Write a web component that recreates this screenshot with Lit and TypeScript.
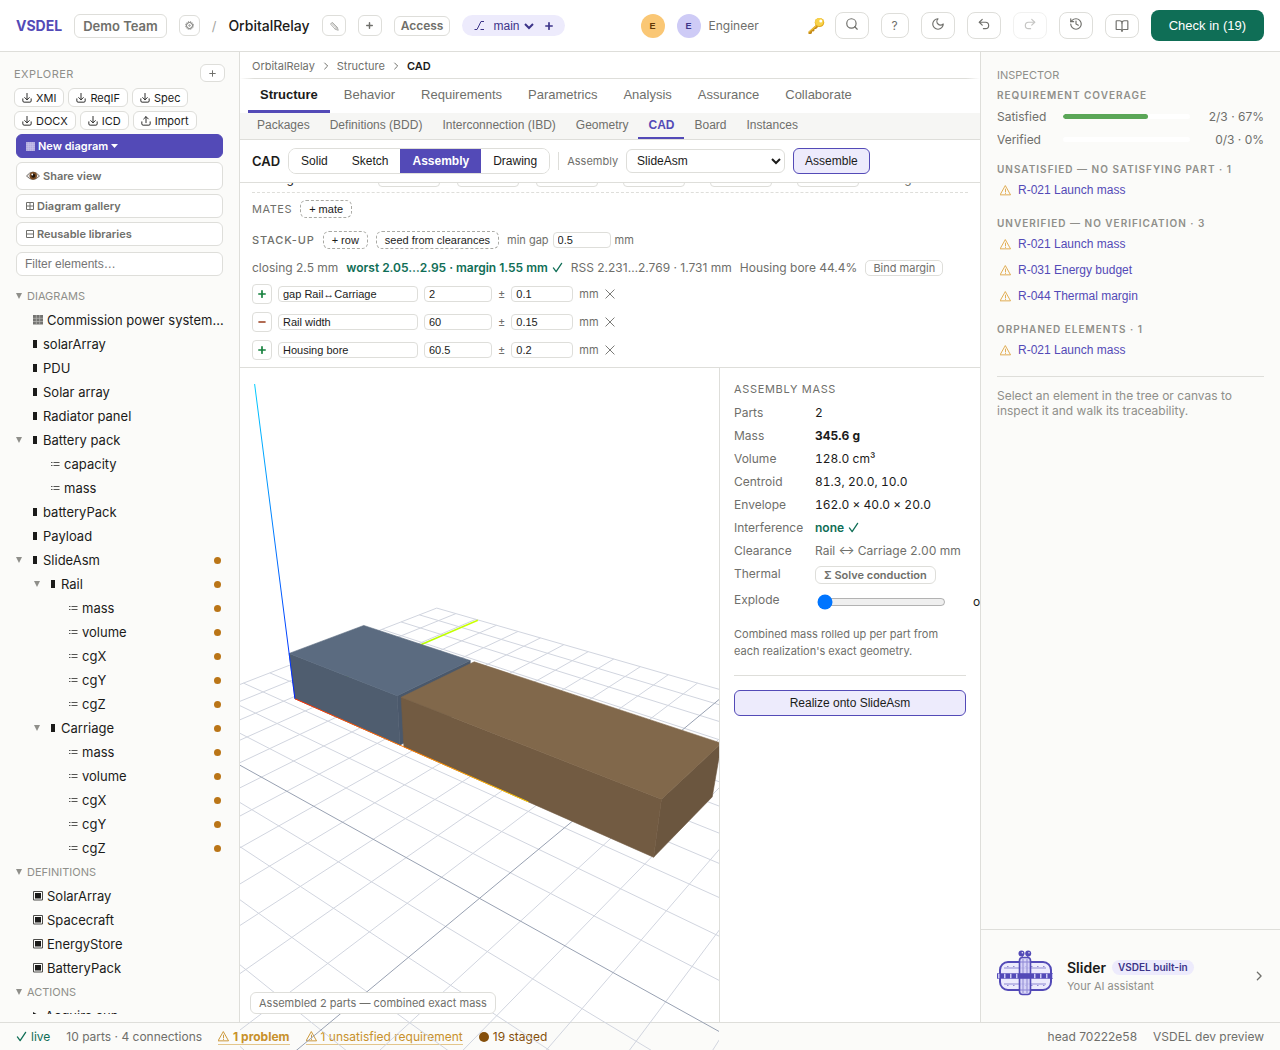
import { LitElement, html, svg, css, nothing } from "lit";
import type { TemplateResult } from "lit";
import { customElement } from "lit/decorators.js";
import { classMap } from "lit/directives/class-map.js";

/* ---------- icons ---------- */

const stroke = (size: number, body: TemplateResult, width = 2) => html`<svg
  class="icon" width=${size} height=${size} viewBox="0 0 24 24" fill="none" stroke="currentColor"
  stroke-width=${width} stroke-linecap="round" stroke-linejoin="round" aria-hidden="true">${body}</svg>`;

const icons = {
  download: () => stroke(10, svg`<path d="M12 1v15M6.500 11l5.500 5.500 5.500-5.500M2 14v5a3 3 0 0 0 3 3h14a3 3 0 0 0 3-3v-5"/>`, 2.2),
  upload: () => stroke(10, svg`<path d="M12 16V2M6.500 7 12 1.500 17.500 7M2 14v5a3 3 0 0 0 3 3h14a3 3 0 0 0 3-3v-5"/>`, 2.2),
  search: () => stroke(14, svg`<circle cx="11" cy="11" r="8"/><path d="m21 21-4.3-4.3"/>`),
  moon: () => stroke(14, svg`<path d="M12 3a6 6 0 0 0 9 9 9 9 0 1 1-9-9Z"/>`),
  undo: () => stroke(14, svg`<path d="M9 14 4 9l5-5"/><path d="M4 9h10.5a5.5 5.5 0 0 1 0 11H11"/>`),
  redo: () => stroke(14, svg`<path d="m15 14 5-5-5-5"/><path d="M20 9H9.500a5.500 5.500 0 0 0 0 11H13"/>`),
  history: () => stroke(14, svg`<path d="M3 12a9 9 0 1 0 9-9 9.750 9.750 0 0 0-6.740 2.740L3 8"/><path d="M3 3v5h5M12 7v5l4 2"/>`),
  book: () => stroke(14, svg`<path d="M12 7v14"/><path d="M3 18a1 1 0 0 1-1-1V4a1 1 0 0 1 1-1h5a4 4 0 0 1 4 4 4 4 0 0 1 4-4h5a1 1 0 0 1 1 1v13a1 1 0 0 1-1 1h-6a3 3 0 0 0-3 3 3 3 0 0 0-3-3z"/>`),
  plus: (size = 10, width = 3.4) => stroke(size, svg`<path d="M12 2.500v19M2.500 12h19"/>`, width),
  minus: (size = 10) => stroke(size, svg`<path d="M3 12h18"/>`, 5),
  close: () => stroke(10, svg`<path d="M2 2l20 20M22 2L2 22"/>`, 2.2),
  check: () => stroke(11, svg`<path d="M3 13l6 8L21 3"/>`, 2.8),
  chevron: (size = 10) => stroke(size, svg`<path d="m8 3 9 9-9 9"/>`, 3),
  warning: (size = 11) => stroke(size, svg`<path d="M12 2 23 21.500H1zM12 9v6M12 18v.5"/>`, 2),
  gear: () => html`<svg class="icon" width="9" height="9" viewBox="0 0 18 18" fill="none" stroke="currentColor" aria-hidden="true">
    <circle cx="9" cy="9" r="6" stroke-width="2"/><circle cx="9" cy="9" r="1.500" stroke-width="1.500"/>
    <circle cx="9" cy="9" r="7.800" stroke-width="1.800" stroke-dasharray="2 2.080"/></svg>`,
  pencil: () => html`<svg class="icon" width="10" height="10" viewBox="0 0 20 20" fill="none" stroke="currentColor" stroke-width="1.800" aria-hidden="true">
    <path d="M3 6 6.500 2.500 16.500 12.500l2 6-6-2zM5 4l10.500 10.500M12.500 16.500l4-4"/></svg>`,
  branch: () => html`<svg class="icon" width="11" height="11" viewBox="0 0 22 22" fill="none" stroke="currentColor" stroke-width="2" aria-hidden="true">
    <path d="M1 19h5L14 3h6M13 19h7"/></svg>`,
  key: () => html`<svg class="icon" width="18" height="18" viewBox="0 0 36 36" aria-hidden="true">
    <path d="M19 15 3 29.500V34h5l2-2v-3h3l2-2v-3h3l5-5z" fill="#c58a17"/>
    <path d="M19 15 3 29.500V32l18-15z" fill="#f0c23b"/>
    <ellipse cx="25" cy="11" rx="9.500" ry="9" fill="#e3a91e"/>
    <ellipse cx="24.500" cy="10" rx="8.500" ry="8" fill="#f8d34a"/>
    <circle cx="27.500" cy="8" r="3" fill="#fff"/></svg>`,
  eye: () => html`<svg class="icon" width="14" height="12" viewBox="0 0 28 24" aria-hidden="true">
    <path d="M1 12Q14-4 27 12 14 26 1 12Z" fill="#e9e7e6" stroke="#77716d" stroke-width="2"/>
    <circle cx="14.500" cy="11.500" r="7.500" fill="#7a4c22"/><circle cx="14.500" cy="11.500" r="4" fill="#1d130c"/>
    <circle cx="12.500" cy="9" r="1.800" fill="#fff"/></svg>`,
  panel: () => html`<svg class="icon" width="9" height="9" viewBox="0 0 9 9" aria-hidden="true">
    <path d="M0 0h9v9H0z" fill="#b3acdf"/><path d="M0 2.500h9M0 4.500h9M0 6.500h9M2.500 0v9M4.500 0v9M6.500 0v9" stroke="#c8c3ea" stroke-width=".5"/></svg>`,
  squaredPlus: () => html`<svg class="icon" width="8" height="8" viewBox="0 0 8 8" fill="none" stroke="currentColor" aria-hidden="true">
    <path d="M.5.500h7v7h-7zM4 .500v7M.5 4h7"/></svg>`,
  squaredMinus: () => html`<svg class="icon" width="8" height="8" viewBox="0 0 8 8" fill="none" stroke="currentColor" aria-hidden="true">
    <path d="M.5.500h7v7h-7zM.5 4h7"/></svg>`,
  caret: () => html`<svg class="icon" width="7" height="4" viewBox="0 0 7 4" fill="currentColor" aria-hidden="true"><path d="M0 0h7L3.500 4z"/></svg>`,
};

/** Small glyphs that stand before the names in the model tree. */
const kindGlyph: Record<string, () => TemplateResult> = {
  diagram: () => html`<svg class="icon" width="10" height="10" viewBox="0 0 10 10" aria-hidden="true">
    <path d="M0 0h10v9.500H0z" fill="#737371"/><path d="M3.300 0v10M6.700 0v10M0 3.300h10M0 6.500h10" stroke="#b9b9b6" stroke-width=".7"/></svg>`,
  part: () => html`<svg class="icon" width="4" height="8" viewBox="0 0 4 8" aria-hidden="true"><path d="M0 0h4v8H0z" fill="#1b1b1a"/></svg>`,
  value: () => html`<svg class="icon" width="9" height="6" viewBox="0 0 9 6" aria-hidden="true">
    <path d="M0 1.500h1.500M0 4.500h1.500M2.500 1.500h6M2.500 4.500h6" stroke="#555553"/></svg>`,
  block: () => html`<svg class="icon" width="10" height="10" viewBox="0 0 10 10" aria-hidden="true">
    <path d="M.5.500h9v8.500h-9z" fill="none" stroke="#4c4c4a"/><path d="M2 2h6v5.500H2z" fill="#1b1b1a"/></svg>`,
  action: () => html`<svg class="icon" width="8" height="8" viewBox="0 0 8 8" aria-hidden="true"><path d="M0 0l7 4-7 4z" fill="#1b1b1a"/></svg>`,
};

/* ---------- shared styles ---------- */

const base = css`
  :host {
    --ink: #1b1b1a;
    --muted: #6f6f6b;
    --faint: #8f8f8a;
    --line: #dededa;
    --accent: #534ab7;
    --accent-soft: #edebfc;
    --green: #0f6e56;
    --amber: #c8912b;
    --ui: Inter, "Noto Sans", sans-serif;
    --control: "Liberation Sans", Arial, sans-serif;
  }
  *,
  *::before,
  *::after { box-sizing: border-box; }
  .icon { flex: none; display: block; }
  button,
  input,
  select { font: 12px var(--control); color: var(--ink); margin: 0; }
  button {
    display: inline-flex;
    align-items: center;
    justify-content: center;
    gap: 4px;
    padding: 0;
    white-space: nowrap;
    background: #fff;
    border: 1px solid var(--line);
    border-radius: 6px;
  }
  a { color: inherit; text-decoration: none; }
  h2,
  h3,
  p,
  ul,
  dl,
  dd { margin: 0; padding: 0; }
  ul { list-style: none; }
`;

/* ---------- 3D scene ---------- */

type Vec = [number, number, number];

const dot = (a: Vec, b: Vec) => a[0] * b[0] + a[1] * b[1] + a[2] * b[2];
const sub = (a: Vec, b: Vec): Vec => [a[0] - b[0], a[1] - b[1], a[2] - b[2]];
const scale = (a: Vec, k: number): Vec => [a[0] * k, a[1] * k, a[2] * k];
const cross = (a: Vec, b: Vec): Vec => [
  a[1] * b[2] - a[2] * b[1],
  a[2] * b[0] - a[0] * b[2],
  a[0] * b[1] - a[1] * b[0],
];
const unit = (a: Vec) => scale(a, 1 / Math.hypot(...a));

const VIEW_HEIGHT = 700;
const ENVELOPE: Vec = [162, 40, 20];
const CENTER = scale(ENVELOPE, 0.5);
const DIAGONAL = Math.hypot(...ENVELOPE);
const FOCAL = VIEW_HEIGHT / 2 / Math.tan((25 * Math.PI) / 180);
const EYE = scale([0.9, -1.1, 0.75], DIAGONAL);
const BACK = unit(EYE);
const RIGHT = unit(cross([0, 0, 1], BACK));
const UP = cross(BACK, RIGHT);
const DISTANCE = Math.hypot(...EYE);
const NEAR = 8;

const depth = (p: Vec) => DISTANCE - dot(sub(p, CENTER), BACK);
const project = (p: Vec) => {
  const q = sub(p, CENTER);
  const k = FOCAL / depth(p);
  return [dot(q, RIGHT) * k, -dot(q, UP) * k].map((n) => +n.toFixed(2));
};

/** Cuts a segment at the near plane and projects what remains. */
const segment = (a: Vec, b: Vec) => {
  const da = depth(a);
  const db = depth(b);
  const cut = (near: Vec, far: Vec, dn: number, df: number): Vec => {
    const t = (NEAR - dn) / (df - dn);
    return [0, 1, 2].map((i) => near[i] + (far[i] - near[i]) * t) as Vec;
  };
  const p = project(da < NEAR ? cut(a, b, da, db) : a);
  const q = project(db < NEAR ? cut(b, a, db, da) : b);
  return `M${p}L${q}`;
};

const floorLines = () => {
  const half = DIAGONAL * 1.5;
  const z = CENTER[2] - DIAGONAL / 2;
  const step = half / 12;
  let light = "";
  let dark = "";
  for (let i = -12; i <= 12; i++) {
    const o = i * step;
    const pair =
      segment([CENTER[0] + o, CENTER[1] - half, z], [CENTER[0] + o, CENTER[1] + half, z]) +
      segment([CENTER[0] - half, CENTER[1] + o, z], [CENTER[0] + half, CENTER[1] + o, z]);
    if (i === 0) dark += pair;
    else light += pair;
  }
  return { light, dark };
};

const solids = [
  { x0: 0, x1: 60, top: "#5b6b80", front: "#4f5d6f", side: "#4a586b" },
  { x0: 62, x1: 162, top: "#81684b", front: "#725b42", side: "#6b563f" },
];

const polygon = (points: Vec[], fill: string) =>
  svg`<polygon points=${points.map((p) => project(p).join(",")).join(" ")} fill=${fill} stroke=${fill} stroke-width=".6"/>`;

@customElement("assembly-scene")
export class AssemblyScene extends LitElement {
  static styles = css`
    :host { display: block; height: 700px; pointer-events: none; }
    .scene { display: block; width: 100%; height: 100%; overflow: hidden; }
  `;

  private axis(id: string, to: Vec, width = 1) {
    return svg`<path d=${segment([0, 0, 0], to)} stroke=${`url(#${id})`} stroke-width=${width} fill="none"/>`;
  }

  private ramp(id: string, to: Vec, from: string, end: string) {
    const [x1, y1] = project([0, 0, 0]);
    const [x2, y2] = project(to);
    return svg`<linearGradient id=${id} gradientUnits="userSpaceOnUse" x1=${x1} y1=${y1} x2=${x2} y2=${y2}>
      <stop offset="0" stop-color=${from}/><stop offset="1" stop-color=${end}/></linearGradient>`;
  }

  render() {
    const { light, dark } = floorLines();
    const reach = DIAGONAL * 0.7;
    const [, sy, sz] = ENVELOPE;
    return html`<svg class="scene" viewBox="-200 -350 400 700" role="img" aria-label="SlideAsm assembly">
      <defs>
        ${this.ramp("ax", [reach, 0, 0], "#ff2a00", "#ffcc00")}
        ${this.ramp("ay", [0, reach, 0], "#88ff00", "#ccff00")}
        ${this.ramp("az", [0, 0, reach], "#0020ff", "#00ccff")}
      </defs>
      <path d=${light} stroke="#d1d5df" fill="none"/>
      <path d=${dark} stroke="#98a1b2" fill="none"/>
      ${this.axis("ay", [0, reach, 0], 1.5)}
      ${solids.map(
        (s) => svg`
          ${polygon([[s.x1, 0, 0], [s.x1, sy, 0], [s.x1, sy, sz], [s.x1, 0, sz]], s.side)}
          ${polygon([[s.x0, 0, 0], [s.x1, 0, 0], [s.x1, 0, sz], [s.x0, 0, sz]], s.front)}
          ${polygon([[s.x0, 0, sz], [s.x1, 0, sz], [s.x1, sy, sz], [s.x0, sy, sz]], s.top)}`,
      )}
      ${this.axis("ax", [reach, 0, 0])}
      ${this.axis("az", [0, 0, reach])}
    </svg>`;
  }
}

/* ---------- top bar ---------- */

@customElement("top-bar")
export class TopBar extends LitElement {
  static styles = [
    base,
    css`
      :host {
        display: flex;
        align-items: center;
        gap: 12px;
        height: 52px;
        padding: 0 16px;
        background: #fff;
        border-bottom: 1px solid var(--line);
        font: 13px var(--ui);
        color: var(--muted);
      }
      .brand { font-weight: 700; font-size: 14px; color: var(--accent); }
      .team { height: 24px; padding: 0 8px; font: 600 13px var(--ui); color: var(--muted); }
      .small { width: 24px; height: 21px; color: var(--muted); }
      .gear { width: 21px; }
      .pale { color: #a5a5a1; }
      .project { font: 500 14px var(--ui); color: var(--ink); }
      .access { height: 20px; padding: 0 6px; font: 600 12px var(--ui); color: var(--muted); }
      .branch {
        display: flex;
        align-items: center;
        height: 21px;
        padding: 0 12px;
        color: #3c3489;
        background: var(--accent-soft);
        border-radius: 11px;
      }
      .branch select {
        width: 48px;
        padding: 0;
        margin-left: 4px;
        color: inherit;
        background: transparent;
        border: 0;
      }
      .branch button { margin-left: 8px; color: inherit; background: none; border: 0; }
      .spacer { flex: 1; }
      .avatar {
        display: flex;
        align-items: center;
        justify-content: center;
        width: 24px;
        height: 24px;
        border-radius: 50%;
        font: 700 9px var(--control);
      }
      .guest { background: #fac775; color: #633806; }
      .self { background: #cecbf6; color: #3c3489; }
      .who { display: flex; align-items: center; gap: 8px; font: 12px var(--ui); }
      .key { background: none; border: 0; margin: 0 -2px 0 36px; }
      .tool { width: 34px; height: 27px; padding-bottom: 3px; border-radius: 8px; color: var(--muted); }
      .help { width: 28px; height: 25px; padding: 0; font: 12px var(--ui); }
      .docs { height: 24px; padding: 0; }
      .tool:disabled { opacity: 0.4; }
      .commit {
        height: 31px;
        padding: 0 18px;
        color: #fff;
        font-size: 13px;
        background: var(--green);
        border: 0;
        border-radius: 8px;
      }
    `,
  ];

  render() {
    return html`
      <span class="brand">VSDEL</span>
      <button class="team">Demo Team</button>
      <button class="small gear" aria-label="Team settings">${icons.gear()}</button>
      <span class="pale">/</span>
      <span class="project">OrbitalRelay</span>
      <button class="small pale" aria-label="Rename project">${icons.pencil()}</button>
      <button class="small" aria-label="New project">${icons.plus(7, 5)}</button>
      <button class="access">Access</button>
      <div class="branch">
        ${icons.branch()}
        <select aria-label="Branch"><option>main</option></select>
        <button aria-label="New branch">${icons.plus(8, 5)}</button>
      </div>
      <span class="spacer"></span>
      <span class="avatar guest">E</span>
      <span class="who"><span class="avatar self">E</span>Engineer</span>
      <button class="key" aria-label="Access keys">${icons.key()}</button>
      <button class="tool" aria-label="Search">${icons.search()}</button>
      <button class="tool help">?</button>
      <button class="tool" aria-label="Dark theme">${icons.moon()}</button>
      <button class="tool" aria-label="Undo">${icons.undo()}</button>
      <button class="tool" aria-label="Redo" disabled>${icons.redo()}</button>
      <button class="tool" aria-label="History">${icons.history()}</button>
      <button class="tool docs" aria-label="Documentation">${icons.book()}</button>
      <button class="commit">Check in (19)</button>
    `;
  }
}

/* ---------- explorer ---------- */

interface Row {
  name: string;
  kind?: string;
  level?: number;
  open?: boolean;
  staged?: boolean;
}

const values = ["mass", "volume", "cgX", "cgY", "cgZ"].map(
  (name): Row => ({ name, kind: "value", level: 2, staged: true }),
);

const tree: Row[] = [
  { name: "Diagrams" },
  { name: "Commission power system…", kind: "diagram" },
  { name: "solarArray", kind: "part" },
  { name: "PDU", kind: "part" },
  { name: "Solar array", kind: "part" },
  { name: "Radiator panel", kind: "part" },
  { name: "Battery pack", kind: "part", open: true },
  { name: "capacity", kind: "value", level: 1 },
  { name: "mass", kind: "value", level: 1 },
  { name: "batteryPack", kind: "part" },
  { name: "Payload", kind: "part" },
  { name: "SlideAsm", kind: "part", open: true, staged: true },
  { name: "Rail", kind: "part", level: 1, open: true, staged: true },
  ...values,
  { name: "Carriage", kind: "part", level: 1, open: true, staged: true },
  ...values,
  { name: "Definitions" },
  { name: "SolarArray", kind: "block" },
  { name: "Spacecraft", kind: "block" },
  { name: "EnergyStore", kind: "block" },
  { name: "BatteryPack", kind: "block" },
  { name: "Actions" },
  { name: "Acquire sun", kind: "action" },
];

@customElement("model-explorer")
export class ModelExplorer extends LitElement {
  static styles = [
    base,
    css`
      :host {
        display: flex;
        flex-direction: column;
        min-height: 0;
        padding: 12px 14px 8px;
        background: #fbfbf9;
        border-right: 1px solid var(--line);
        font: 13px var(--ui);
        color: var(--ink);
      }
      .head { display: flex; justify-content: space-between; align-items: center; height: 18px; }
      h2 { font: 11px var(--ui); letter-spacing: 0.04em; color: var(--faint); padding-top: 2px; }
      .add { width: 25px; height: 18px; color: var(--muted); }
      .files { display: flex; flex-wrap: wrap; gap: 4px; margin-top: 6px; }
      .files button { height: 19px; padding: 0 7px; font: 11px var(--ui); }
      .actions { display: grid; gap: 4px; margin: 4px 2px 0; }
      .actions button {
        justify-content: flex-start;
        gap: 3px;
        height: 24px;
        padding: 0 9px;
        font: 600 11px var(--ui);
        color: var(--muted);
      }
      .actions .primary { color: #fff; background: var(--accent); border-color: var(--accent); }
      .actions .share { height: 28px; }
      .filter {
        height: 24px;
        margin: 6px 2px 8px;
        padding: 0 8px;
        background: #fff;
        border: 1px solid var(--line);
        border-radius: 6px;
      }
      .tree { flex: 1; min-height: 0; overflow: hidden; }
      .row { display: flex; align-items: center; height: 24px; }
      .row.l1 { padding-left: 18px; }
      .row.l2 { padding-left: 36px; }
      .toggle { width: 19px; padding: 0 0 0 2px; justify-content: flex-start; border: 0; background: none; color: var(--faint); }
      .group { font: 11px var(--ui); color: var(--faint); text-transform: uppercase; }
      .group .toggle { width: 13px; }
      .name { flex: 1; min-width: 0; overflow: hidden; text-overflow: ellipsis; white-space: nowrap; }
      .kind { flex: none; margin-right: 4px; }
      .kind.part { margin-right: 6px; }
      .dot { flex: none; width: 7px; height: 7px; margin-right: 4px; border-radius: 50%; background: #ba7517; }
    `,
  ];

  private arrow = () => html`<svg class="icon" width="6" height="6" viewBox="0 0 6 6" fill="currentColor" aria-hidden="true"><path d="M0 0h6L3 6z"/></svg>`;

  private row(r: Row) {
    if (!r.kind) {
      return html`<li class="row group"><button class="toggle" aria-label=${r.name}>${this.arrow()}</button>${r.name}</li>`;
    }
    return html`<li class=${classMap({ row: true, l1: r.level === 1, l2: r.level === 2 })}>
      ${r.open
        ? html`<button class="toggle" aria-label=${r.name}>${this.arrow()}</button>`
        : html`<span class="toggle"></span>`}
      <span class=${`kind ${r.kind}`}>${kindGlyph[r.kind]()}</span>
      <span class="name">${r.name}</span>
      ${r.staged ? html`<span class="dot"></span>` : nothing}
    </li>`;
  }

  render() {
    const files = ["XMI", "ReqIF", "Spec", "DOCX", "ICD"];
    return html`
      <div class="head">
        <h2>EXPLORER</h2>
        <button class="add" aria-label="Add element">${icons.plus(7)}</button>
      </div>
      <div class="files">
        ${files.map((f) => html`<button>${icons.download()}${f}</button>`)}
        <button>${icons.upload()}Import</button>
      </div>
      <div class="actions">
        <button class="primary">${icons.panel()}New diagram${icons.caret()}</button>
        <button class="share">${icons.eye()}Share view</button>
        <button>${icons.squaredPlus()}Diagram gallery</button>
        <button>${icons.squaredMinus()}Reusable libraries</button>
      </div>
      <input class="filter" type="text" aria-label="Filter elements" placeholder="Filter elements…" />
      <ul class="tree">${tree.map((r) => this.row(r))}</ul>
    `;
  }
}

/* ---------- workspace ---------- */

const stack = [
  { add: true, name: "gap Rail↔Carriage", size: "2", tol: "0.1" },
  { add: false, name: "Rail width", size: "60", tol: "0.15" },
  { add: true, name: "Housing bore", size: "60.5", tol: "0.2" },
];

@customElement("cad-workspace")
export class CadWorkspace extends LitElement {
  static styles = [
    base,
    css`
      :host {
        display: flex;
        flex-direction: column;
        min-width: 0;
        min-height: 0;
        background: #fff;
        font: 12px var(--ui);
        color: var(--muted);
      }
      .crumbs { display: flex; align-items: center; gap: 7px; height: 26px; padding: 2px 12px 0; font-size: 11px; }
      .crumbs strong { font-weight: 600; color: var(--ink); }
      .rule { flex: none; height: 1px; background: linear-gradient(90deg, transparent, var(--line) 14px calc(100% - 14px), transparent); }
      nav { display: flex; flex: none; }
      nav a { display: flex; align-items: center; font-family: var(--control); }
      .tabs { height: 34px; padding: 0 8px; }
      .tabs a { padding: 0 12px; font-size: 13px; border-bottom: 3px solid transparent; margin-right: 2px; }
      .tabs .on { font-weight: 700; color: var(--ink); border-color: var(--accent); }
      .subtabs { height: 27px; padding: 0 7px; background: #f6f6f4; border-bottom: 1px solid var(--line); }
      .subtabs a { padding: 0 10px; border-bottom: 2px solid transparent; }
      .subtabs .on { font-weight: 700; color: var(--accent); border-color: var(--accent); }
      .bar {
        display: flex;
        flex: none;
        align-items: center;
        gap: 8px;
        height: 43px;
        padding: 0 12px;
        border-bottom: 1px solid var(--line);
      }
      .bar h2 { font: 600 13px var(--ui); color: var(--ink); }
      .modes { display: flex; height: 26px; overflow: hidden; border: 1px solid var(--line); border-radius: 8px; }
      .modes button { padding: 0 12px; border: 0; border-radius: 0; }
      .modes .on { font-weight: 700; color: #fff; background: var(--accent); }
      .bar .pick { display: flex; align-items: center; gap: 8px; padding-left: 8px; border-left: 1px solid var(--line); height: 18px; font-size: 11px; }
      .pick select { width: 159px; height: 24px; padding: 0 6px; background: #fff; border: 1px solid var(--line); border-radius: 6px; }
      .soft { height: 26px; padding: 0 11px; background: var(--accent-soft); border-color: var(--accent); }

      .sheet {
        display: flex;
        flex: none;
        flex-direction: column;
        justify-content: flex-end;
        height: 185px;
        padding: 0 12px 3px;
        overflow: hidden;
        font-size: 11px;
        border-bottom: 1px solid var(--line);
      }
      .sheet input {
        height: 16px;
        padding: 0 4px;
        font-size: 11px;
        background: #fff;
        border: 1px solid var(--line);
        border-radius: 4px;
      }
      .line { display: flex; flex: none; align-items: center; gap: 8px; }
      .place { height: 28px; gap: 17px; font-size: 12px; border-bottom: 1px dashed var(--line); color: var(--ink); }
      .place .label { width: 109px; }
      .place .turn { margin-left: 8px; }
      .place .mass { margin-left: -5px; color: var(--muted); }
      .place input { width: 62px; }
      .mates { height: 31px; }
      .seeds { height: 31px; }
      .cap { font: 11px var(--ui); letter-spacing: 0.05em; }
      .strong { font-weight: 500; letter-spacing: 0.08em; }
      .dashed { height: 18px; padding: 0 8px; font-size: 11px; border: 1px dashed #a9a9a4; }
      .gap { display: flex; align-items: center; gap: 4px; }
      .gap input { width: 58px; }
      .result { height: 25px; gap: 8px; font-size: 12px; }
      .good { display: inline-flex; align-items: center; gap: 4px; font-weight: 600; color: var(--green); }
      .bind { height: 16px; padding: 0 7px; font: 11px var(--ui); color: var(--muted); border-radius: 5px; }
      .entry { height: 28px; gap: 6px; }
      .sign { width: 20px; height: 20px; border-radius: 4px; color: #15803d; }
      .sign.neg { color: #993c1d; }
      .entry .title { width: 140px; }
      .entry .size { width: 68px; }
      .entry .tol { width: 62px; }
      .drop { border: 0; background: none; color: var(--muted); }

      .stage { display: grid; flex: 1; min-height: 0; grid-template-columns: minmax(0, 1fr) 261px; }
      .view { position: relative; min-width: 0; }
      assembly-scene { position: absolute; inset: 0 0 auto; z-index: 2; }
      .note {
        position: absolute;
        left: 10px;
        bottom: 8px;
        z-index: 3;
        padding: 3px 8px;
        line-height: 14px;
        font-size: 11px;
        background: #fff;
        border: 1px solid var(--line);
        border-radius: 6px;
      }
      .mass-panel { padding: 13px 14px; overflow: hidden; border-left: 1px solid var(--line); }
      .mass-panel h3 { font: 11px/16px var(--ui); letter-spacing: 0.06em; margin-bottom: 4px; }
      .facts {
        display: grid;
        grid-template-columns: 71px minmax(0, 1fr);
        column-gap: 10px;
        margin-bottom: 11px;
        line-height: 23px;
        font-variant-numeric: tabular-nums;
      }
      .facts dt { white-space: nowrap; }
      .facts dd { white-space: nowrap; color: var(--ink); }
      .facts .soft-text { color: var(--muted); }
      .facts b { font-weight: 700; }
      .facts .action { display: flex; align-items: center; height: 26px; }
      .solve { height: 18px; padding: 0 8px; font: 600 11px var(--ui); color: var(--muted); }
      .slide { display: flex; align-items: center; height: 27px; gap: 27px; }
      .slide input { width: 129px; margin: 0 0 0 2px; }
      .hint { padding: 0 0 15px; font-size: 11px; line-height: 17px; border-bottom: 1px solid var(--line); }
      .realize { width: 100%; margin-top: 14px; }
    `,
  ];

  private fact(name: string, value: unknown, cls = "") {
    return html`<dt>${name}</dt><dd class=${cls}>${value}</dd>`;
  }

  render() {
    const tabs = ["Structure", "Behavior", "Requirements", "Parametrics", "Analysis", "Assurance", "Collaborate"];
    const subtabs = ["Packages", "Definitions (BDD)", "Interconnection (IBD)", "Geometry", "CAD", "Board", "Instances"];
    const modes = ["Solid", "Sketch", "Assembly", "Drawing"];
    const link = (on: string) => (t: string) => html`<a href="#" class=${classMap({ on: t === on })}>${t}</a>`;
    return html`
      <div class="crumbs">
        <span>OrbitalRelay</span>${icons.chevron(8)}<span>Structure</span>${icons.chevron(8)}<strong>CAD</strong>
      </div>
      <div class="rule"></div>
      <nav class="tabs">${tabs.map(link("Structure"))}</nav>
      <nav class="subtabs">${subtabs.map(link("CAD"))}</nav>
      <div class="bar">
        <h2>CAD</h2>
        <div class="modes">
          ${modes.map((m) => html`<button class=${classMap({ on: m === "Assembly" })}>${m}</button>`)}
        </div>
        <label class="pick">Assembly <select><option>SlideAsm</option></select></label>
        <button class="soft">Assemble</button>
      </div>

      <section class="sheet">
        <div class="line place">
          <span class="label">Carriage</span>
          ${["x", "y", "z"].map((a) => html`<input aria-label=${`Offset ${a}`} />`)}
          ${["x", "y", "z"].map((a) => html`<input class="turn" aria-label=${`Rotation ${a}`} />`)}
          <span class="mass">216.0 g</span>
        </div>
        <div class="line mates"><span class="cap">MATES</span><button class="dashed">+ mate</button></div>
        <div class="line seeds">
          <span class="cap strong">STACK-UP</span>
          <button class="dashed">+ row</button>
          <button class="dashed">seed from clearances</button>
          <label class="gap">min gap <input .value=${"0.5"} /> mm</label>
        </div>
        <div class="line result">
          <span>closing 2.5 mm</span>
          <span class="good">worst 2.05…2.95 · margin 1.55 mm ${icons.check()}</span>
          <span>RSS 2.231…2.769 · 1.731 mm</span>
          <span>Housing bore 44.4%</span>
          <button class="bind">Bind margin</button>
        </div>
        ${stack.map(
          (s) => html`<div class="line entry">
            <button class=${classMap({ sign: true, neg: !s.add })} aria-label="Direction">
              ${s.add ? icons.plus(8, 5) : icons.minus(8)}
            </button>
            <input class="title" aria-label="Name" .value=${s.name} />
            <input class="size" aria-label="Nominal" .value=${s.size} />
            <span>±</span>
            <input class="tol" aria-label="Tolerance" .value=${s.tol} />
            <span>mm</span>
            <button class="drop" aria-label="Remove row">${icons.close()}</button>
          </div>`,
        )}
      </section>

      <div class="stage">
        <div class="view">
          <assembly-scene></assembly-scene>
          <div class="note">Assembled 2 parts — combined exact mass</div>
        </div>
        <aside class="mass-panel">
          <h3>ASSEMBLY MASS</h3>
          <dl class="facts">
            ${this.fact("Parts", "2")}
            ${this.fact("Mass", html`<b>345.6 g</b>`)}
            ${this.fact("Volume", "128.0 cm³")}
            ${this.fact("Centroid", "81.3, 20.0, 10.0")}
            ${this.fact("Envelope", "162.0 × 40.0 × 20.0")}
            ${this.fact("Interference", html`<span class="good">none ${icons.check()}</span>`)}
            ${this.fact("Clearance", "Rail ↔ Carriage 2.00 mm", "soft-text")}
            ${this.fact("Thermal", html`<button class="solve">Σ Solve conduction</button>`, "action")}
            <dt><label for="explode">Explode</label></dt>
            <dd class="slide"><input id="explode" type="range" min="0" max="100" .value=${"0"} />off</dd>
          </dl>
          <p class="hint">Combined mass rolled up per part from each realization's exact geometry.</p>
          <button class="soft realize">Realize onto SlideAsm</button>
        </aside>
      </div>
    `;
  }
}

/* ---------- inspector ---------- */

@customElement("coverage-inspector")
export class CoverageInspector extends LitElement {
  static styles = [
    base,
    css`
      :host {
        display: flex;
        flex-direction: column;
        min-height: 0;
        background: #fbfbf9;
        border-left: 1px solid var(--line);
        font: 12px var(--ui);
        color: var(--muted);
      }
      .body { flex: 1; min-height: 0; padding: 15px 16px; overflow: hidden; }
      h2 { font: 11px/16px var(--ui); color: var(--faint); margin-bottom: 5px; }
      h3 { font: 600 10px/14px var(--ui); letter-spacing: 0.1em; color: var(--faint); }
      .meter { display: grid; grid-template-columns: 56px 127px 1fr; column-gap: 10px; align-items: center; height: 23px; }
      .meters { margin: 3px 0 11px; }
      .meter output { text-align: right; white-space: nowrap; }
      .track { height: 5px; overflow: hidden; border-radius: 3px; background: #fff; }
      .fill { height: 100%; border-radius: 3px; background: #5aa657; }
      .issues { margin: 1px 0 13px; }
      .issues a {
        display: flex;
        align-items: center;
        gap: 7px;
        height: 26px;
        padding-left: 3px;
        font: 12px var(--control);
        color: var(--accent);
      }
      .issues .icon { color: #dfa645; }
      .help { padding-top: 11px; line-height: 15px; color: var(--faint); border-top: 1px solid var(--line); }
      .assistant {
        display: flex;
        flex: none;
        align-items: center;
        gap: 12px;
        height: 93px;
        padding: 0 16px 0 14px;
        color: inherit;
        background: none;
        text-align: left;
        border: 0;
        border-top: 1px solid var(--line);
        border-radius: 0;
      }
      .bot { display: grid; flex: 1; gap: 2px; font: 11px/15px var(--ui); color: var(--faint); }
      .bot-name { display: flex; align-items: center; gap: 6px; font: 600 14px/18px var(--ui); color: var(--ink); }
      .badge { padding: 0 6px; font: 600 10px/15px var(--ui); color: #3c3489; background: var(--accent-soft); border-radius: 8px; }
      .mark { flex: none; }
    `,
  ];

  private meter(name: string, share: number, text: string) {
    return html`<div class="meter">
      <span>${name}</span>
      <div class="track"><div class="fill" style=${`width:${share}%`}></div></div>
      <output>${text}</output>
    </div>`;
  }

  private issues(title: string, items: string[]) {
    return html`<h3>${title} · ${items.length}</h3>
      <ul class="issues">
        ${items.map((i) => html`<li><a href="#">${icons.warning()}${i}</a></li>`)}
      </ul>`;
  }

  private mark() {
    return svg`<svg class="mark" width="60" height="54" viewBox="0 0 60 54" fill="none" stroke="#534ab7" aria-hidden="true">
      <rect x="5" y="13" width="51" height="28" rx="8" fill="#edebfc" stroke-width="2"/>
      <path d="M9 19h42M9 35h42" stroke="#8f89d3"/>
      <path d="M12 17.500h38M12 36.500h38" stroke="#8f89d3" stroke-dasharray="1.500 4.500"/>
      <path d="M2 27h56" stroke-width="5.500"/>
      <path d="M3 27h55" stroke="#cecbf6" stroke-width="4.500" stroke-dasharray="1.500 4.500"/>
      <rect x="24.500" y="8.500" width="11" height="37" rx="3" fill="#cecbf6" fill-opacity=".75" stroke-width="1.600"/>
      <path d="M28 10v34M32 10v34" stroke="#8f89d3"/><path d="M25 27h10" stroke-width="5.500"/>
      <circle cx="26.500" cy="4.500" r="3" fill="#534ab7" stroke="none"/><circle cx="33.200" cy="4.500" r="3" fill="#534ab7" stroke="none"/>
      <circle cx="27.300" cy="3.700" r=".7" fill="#fff" stroke="none"/><circle cx="34" cy="3.700" r=".7" fill="#fff" stroke="none"/>
      <path d="M27 7l1 2M33 7l-1 2"/>
    </svg>`;
  }

  render() {
    return html`
      <div class="body">
        <h2>INSPECTOR</h2>
        <h3>REQUIREMENT COVERAGE</h3>
        <div class="meters">
          ${this.meter("Satisfied", 67, "2/3 · 67%")} ${this.meter("Verified", 0, "0/3 · 0%")}
        </div>
        ${this.issues("UNSATISFIED — NO SATISFYING PART", ["R-021 Launch mass"])}
        ${this.issues("UNVERIFIED — NO VERIFICATION", ["R-021 Launch mass", "R-031 Energy budget", "R-044 Thermal margin"])}
        ${this.issues("ORPHANED ELEMENTS", ["R-021 Launch mass"])}
        <p class="help">Select an element in the tree or canvas to inspect it and walk its traceability.</p>
      </div>
      <button class="assistant">
        ${this.mark()}
        <span class="bot">
          <span class="bot-name">Slider <span class="badge">VSDEL built-in</span></span>
          <span>Your AI assistant</span>
        </span>
        ${icons.chevron()}
      </button>
    `;
  }
}

/* ---------- shell ---------- */

@customElement("app-root")
export class AppRoot extends LitElement {
  static styles = [
    base,
    css`
      :host {
        display: grid;
        grid-template-rows: auto minmax(0, 1fr) auto;
        height: 100vh;
        overflow: hidden;
        background: #fff;
      }
      .main { display: grid; grid-template-columns: 240px minmax(0, 1fr) 300px; min-height: 0; }
      .status {
        display: flex;
        align-items: center;
        gap: 16px;
        height: 28px;
        padding: 0 16px;
        white-space: nowrap;
        background: #fbfbf9;
        border-top: 1px solid var(--line);
        font: 12px var(--ui);
        color: var(--muted);
      }
      .status > * { display: inline-flex; align-items: center; gap: 4px; }
      .live { color: var(--green); }
      .warn { color: var(--amber); border-bottom: 1px solid #e3c68c; }
      .problem { font-weight: 700; }
      .staged { color: #854f0b; }
      .staged i { width: 10px; height: 10px; border-radius: 50%; background: currentColor; }
      .head { margin-left: auto; }
    `,
  ];

  render() {
    return html`
      <top-bar></top-bar>
      <div class="main">
        <model-explorer></model-explorer>
        <cad-workspace></cad-workspace>
        <coverage-inspector></coverage-inspector>
      </div>
      <footer class="status">
        <span class="live">${icons.check()}live</span>
        <span>10 parts · 4 connections</span>
        <a href="#" class="warn problem">${icons.warning()}1 problem</a>
        <a href="#" class="warn">${icons.warning()}1 unsatisfied requirement</a>
        <span class="staged"><i></i>19 staged</span>
        <span class="head">head 70222e58</span>
        <span>VSDEL dev preview</span>
      </footer>
    `;
  }
}
